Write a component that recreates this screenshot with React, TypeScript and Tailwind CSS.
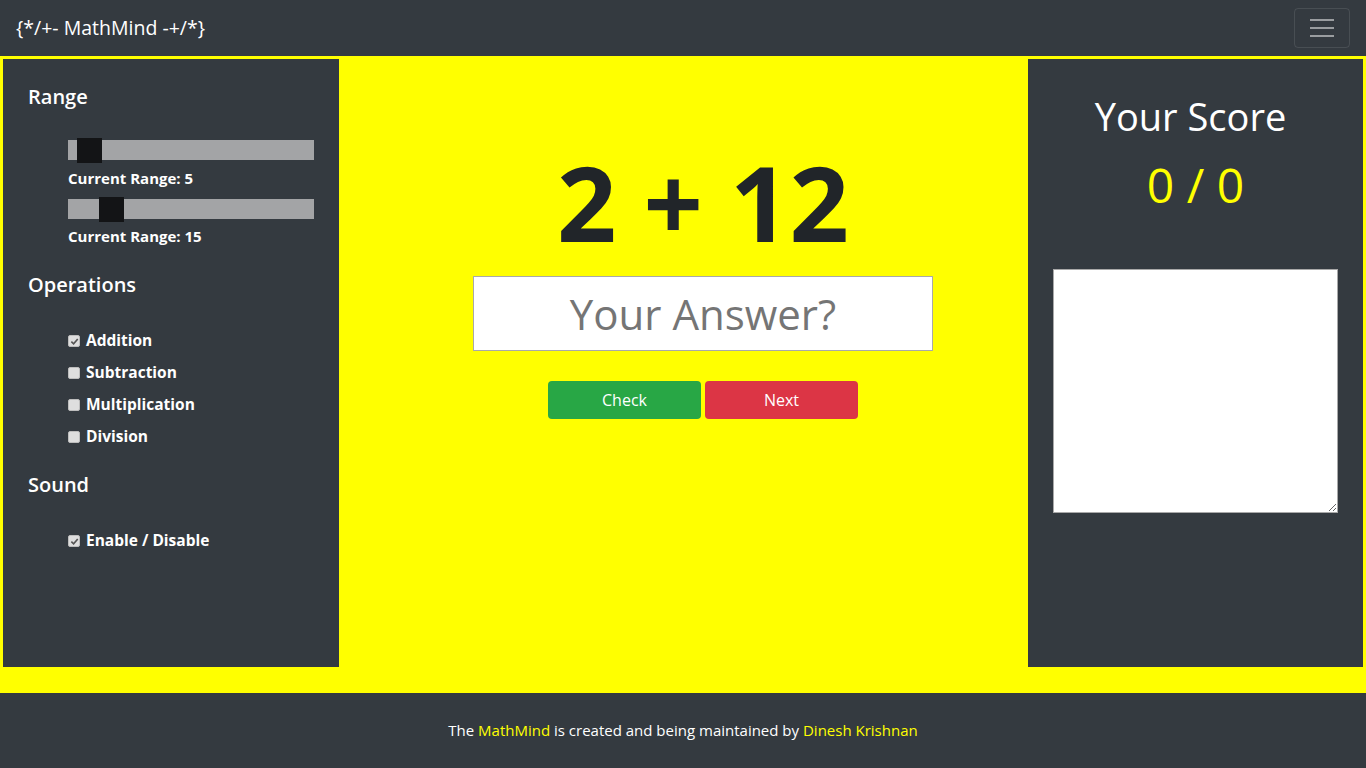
import React from 'react';

const font = { fontFamily: '"Open Sans", "Noto Sans", sans-serif' };

// Fake range slider, drawn to match the flat grey track and square thumb
const Slider: React.FC<{ offset: string }> = ({ offset }) => (
  <div className="relative h-[25px] w-[246px]">
    <div className="absolute left-0 right-0 top-[2px] h-[20px] bg-[#a3a4a6]" />
    <div className={`absolute top-0 h-[25px] w-[25px] bg-[#131416] ${offset}`} />
  </div>
);

const Check: React.FC<{ label: string; checked?: boolean }> = ({ label, checked }) => (
  <div className="flex h-[32px] items-center">
    <span className="mr-[6px] flex h-[12px] w-[12px] items-center justify-center rounded-[2px] border border-[#bdbdbd] bg-[#dedede]">
      {checked && (
        <svg viewBox="0 0 10 10" className="h-[9px] w-[9px]">
          <path d="M1.5 5.2 L4 7.6 L8.6 2.2" fill="none" stroke="#555" strokeWidth="1.8" />
        </svg>
      )}
    </span>
    <span className="text-[15.5px] font-bold text-white">{label}</span>
  </div>
);

export default function App() {
  return (
    <div className="min-h-screen bg-[#343a40]" style={font}>
      {/* Navbar */}
      <nav className="flex h-[56px] items-center justify-between bg-[#343a40] pl-4 pr-4">
        <span className="text-[19.5px] text-white">{'{*/+- MathMind -+/*}'}</span>
        <button className="flex h-[40px] w-[56px] flex-col items-center justify-center gap-[6px] rounded-[4px] border border-white/10">
          <span className="block h-[2px] w-[24px] bg-white/50" />
          <span className="block h-[2px] w-[24px] bg-white/50" />
          <span className="block h-[2px] w-[24px] bg-white/50" />
        </button>
      </nav>

      {/* Main */}
      <div className="bg-[#ffff00] p-[3px] pb-[26px]">
        <div className="flex h-[608px]">
          {/* Settings */}
          <div className="w-[336px] bg-[#343a40] pl-[25px] pt-[26px]">
            <h5 className="text-[20px] font-semibold leading-[24px] text-white">Range</h5>
            <div className="pl-[40px]">
              <div className="mt-[29px]"><Slider offset="left-[9px]" /></div>
              <p className="mt-[5px] text-[15px] font-bold leading-[20px] text-white">Current Range: 5</p>
              <div className="mt-[9px]"><Slider offset="left-[31px]" /></div>
              <p className="mt-[4px] text-[15px] font-bold leading-[20px] text-white">Current Range: 15</p>
            </div>
            <h5 className="mt-[27px] text-[20px] font-semibold leading-[24px] text-white">Operations</h5>
            <div className="mt-[28px] pl-[40px]">
              <Check label="Addition" checked />
              <Check label="Subtraction" />
              <Check label="Multiplication" />
              <Check label="Division" />
            </div>
            <h5 className="mt-[20px] text-[20px] font-semibold leading-[24px] text-white">Sound</h5>
            <div className="mt-[28px] pl-[40px]">
              <Check label="Enable / Disable" checked />
            </div>
          </div>

          {/* Question */}
          <div className="flex w-[689px] flex-col items-center pl-[39px] pt-[80px]">
            <div className="text-[104px] font-bold leading-[125px] text-[#212529]">2 + 12</div>
            <input
              className="mt-[12px] h-[75px] w-[460px] border border-[#a9a9a9] bg-white text-center text-[42px] text-[#212529] outline-none placeholder:text-[#757575]"
              placeholder="Your Answer?"
            />
            <div className="mt-[30px] flex gap-[4px]">
              <button className="h-[38px] w-[153px] rounded-[4px] bg-[#28a745] text-[16px] text-white">Check</button>
              <button className="h-[38px] w-[153px] rounded-[4px] bg-[#dc3545] text-[16px] text-white">Next</button>
            </div>
          </div>

          {/* Score */}
          <div className="flex w-[335px] flex-col items-center bg-[#343a40] px-[25px] pt-[33px]">
            <h1 className="mr-[10px] text-[38px] font-normal leading-[48px] text-white">Your Score</h1>
            <div className="mt-[16px] text-[48px] leading-[58px] text-[#ffff00]">0 / 0</div>
            <textarea className="mt-[55px] h-[244px] w-full border border-[#a9a9a9] bg-white" />
          </div>
        </div>
      </div>

      {/* Footer */}
      <footer className="flex h-[75px] items-center justify-center text-[15px] text-white">
        <span>
          The <span className="text-[#ffff00]">MathMind</span> is created and being maintained by{' '}
          <span className="text-[#ffff00]">Dinesh Krishnan</span>
        </span>
      </footer>
    </div>
  );
}
